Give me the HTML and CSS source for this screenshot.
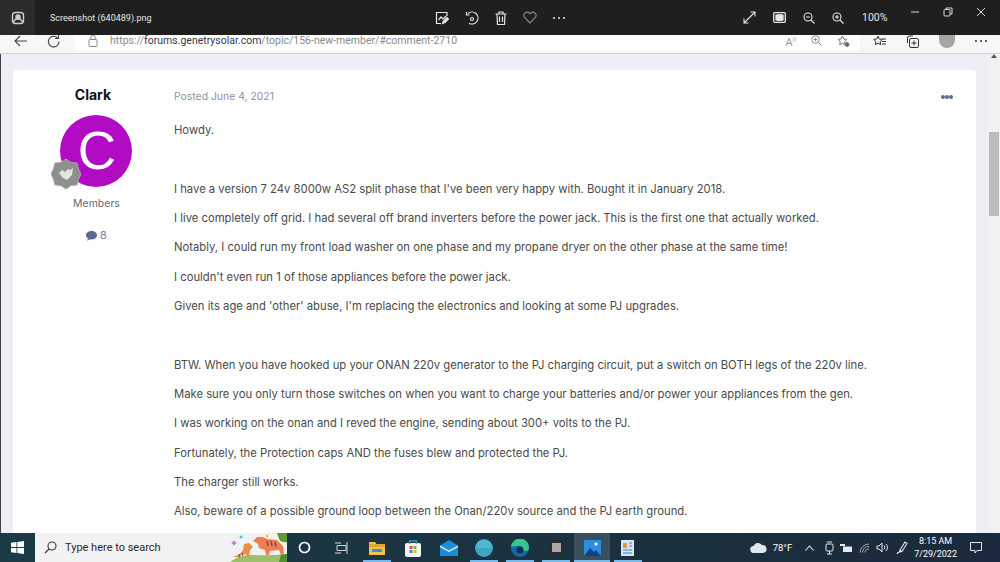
FILE: index.html
```html
<!DOCTYPE html>
<html lang="en">
<head>
  <meta charset="UTF-8">
  <title>Screenshot (640489).png</title>
  <link rel="stylesheet" href="styles.css">
</head>
<body>

  <!-- Photos app title bar -->
  <header class="viewer-bar">
    <div class="app-tile">
      <svg width="14" height="14" viewBox="0 0 14 14" fill="none" stroke="#d0d0d0" stroke-width="1.4"><rect x="1.5" y="1.5" width="11" height="11" rx="3"/><circle cx="7" cy="6" r="2" fill="#d0d0d0"/><path d="M2 11l3-3h4l3 3"/></svg>
    </div>
    <span class="file-name">Screenshot (640489).png</span>
    <div class="viewer-tools">
      <svg width="14" height="14" viewBox="0 0 14 14" fill="none" stroke="#e6e6e6" stroke-width="1.2"><path d="M12 5V1.500H1.500v11H6"/><path d="M3.500 9l2.500-3 2 2 3-3"/><path d="M7.500 12.500l1-2.500 3.500-3.500 1.500 1.500-3.500 3.500z" fill="#e6e6e6"/></svg>
      <svg width="14" height="14" viewBox="0 0 14 14" fill="none" stroke="#e6e6e6" stroke-width="1.2"><path d="M3 2.500A6 6 0 1 1 4 12.200"/><path d="M1.500 1v3h3"/><circle cx="7" cy="8" r="1.500"/></svg>
      <svg width="12" height="14" viewBox="0 0 12 14" fill="none" stroke="#e6e6e6" stroke-width="1.2"><path d="M.5 3h11M4 3V1h4v2M2 3l.5 10.500h7L10 3M4.500 5.500v5.500M7.500 5.500v5.500"/></svg>
      <svg width="14" height="13" viewBox="0 0 14 13" fill="none" stroke="#8c8c8c" stroke-width="1.1"><path d="M7 12L1.700 6.500a3.200 3.200 0 0 1 4.500-4.500L7 2.800l.8-.8a3.200 3.200 0 0 1 4.500 4.500z"/></svg>
      <span class="dots-light"><i></i><i></i><i></i></span>
    </div>
    <div class="zoom-tools">
      <svg width="13" height="13" viewBox="0 0 13 13" fill="none" stroke="#e6e6e6" stroke-width="1.1"><path d="M1 12L12 1M7.500 1H12v4.500M1 7.500V12h4.500"/></svg>
      <svg width="13" height="11" viewBox="0 0 13 11" fill="none" stroke="#e6e6e6" stroke-width="1.3"><rect x=".7" y=".7" width="11.600" height="9.600" rx="1"/><path d="M3 3.200q3.500-1 7 0v4.600q-3.500 1-7 0z" fill="#e6e6e6"/></svg>
      <svg width="12" height="12" viewBox="0 0 12 12" fill="none" stroke="#e6e6e6" stroke-width="1.1"><circle cx="5" cy="5" r="4"/><path d="M8 8l3.500 3.500M3 5h4"/></svg>
      <svg width="12" height="12" viewBox="0 0 12 12" fill="none" stroke="#e6e6e6" stroke-width="1.1"><circle cx="5" cy="5" r="4"/><path d="M8 8l3.500 3.500M3 5h4M5 3v4"/></svg>
      <span class="zoom-level">100%</span>
    </div>
    <div class="window-buttons">
      <svg width="10" height="10" viewBox="0 0 10 10" stroke="#d8d8d8" fill="none"><path d="M1 5h8"/></svg>
      <svg width="10" height="10" viewBox="0 0 10 10" stroke="#d8d8d8" fill="none"><rect x="1" y="2.500" width="6" height="6.500" rx="1"/><path d="M3 2.500V1h6v6H7"/></svg>
      <svg width="10" height="10" viewBox="0 0 10 10" stroke="#d8d8d8" fill="none"><path d="M1 1l8 8M9 1l-8 8"/></svg>
    </div>
  </header>

  <!-- Edge toolbar, cut off by the title bar -->
  <nav class="browser-bar">
    <svg class="nav-back" width="14" height="12" viewBox="0 0 14 12" fill="none" stroke="#444" stroke-width="1.100"><path d="M13 6H1M6 1L1 6l5 5"/></svg>
    <svg class="nav-reload" width="13" height="13" viewBox="0 0 13 13" fill="none" stroke="#444" stroke-width="1.100"><path d="M11 3.500A5.300 5.300 0 1 0 12 6.500M11.500 0v3.500H8"/></svg>
    <div class="address-bar">
      <svg width="10" height="12" viewBox="0 0 10 12" fill="none" stroke="#8a8a8a"><rect x="1" y="4.500" width="8" height="7" rx="1"/><path d="M3 4.500V2a2 2 0 0 1 4 0v2.500"/></svg>
      <span class="url"><span>https://</span><b>forums.genetrysolar.com</b><span>/topic/156-new-member/#comment-2710</span></span>
      <div class="address-icons">
        <span class="read-aloud">A<sup>))</sup></span>
        <svg width="11" height="11" viewBox="0 0 11 11" fill="none" stroke="#8a8a8a"><circle cx="4.500" cy="4.500" r="3.800"/><path d="M7.300 7.300l3.300 3.300M2.800 4.500h3.400M4.500 2.800v3.400"/></svg>
        <svg width="13" height="12" viewBox="0 0 13 12" fill="none" stroke="#777"><path d="M5.500 1l1.400 3 3.100.4-2.300 2.100.6 3.200L5.500 8.200 2.700 9.700l.6-3.200L1 4.400 4.100 4z"/><circle cx="10" cy="9.500" r="2" fill="#666"/></svg>
      </div>
    </div>
    <div class="edge-tools">
      <svg width="13" height="12" viewBox="0 0 13 12" fill="none" stroke="#333"><path d="M5 1l1.300 3 3 .4-2.200 2.100.6 3.200L5 8.200 2.300 9.700l.6-3.200L.7 4.400l3-.4zM9 4h4M9 6.500h4M9 9h4"/></svg>
      <svg width="13" height="13" viewBox="0 0 13 13" fill="none" stroke="#333"><path d="M1.500 8V3a2 2 0 0 1 2-2H7"/><rect x="3.500" y="3.500" width="9" height="9" rx="1.500"/><path d="M8 5.500v5M5.500 8h5"/></svg>
      <span class="profile"></span>
      <span class="dots-dark"><i></i><i></i><i></i></span>
    </div>
  </nav>

  <!-- Forum page -->
  <div class="page">
    <main class="post-column">
      <article class="post-card">
        <aside class="author">
          <h3 class="author-name">Clark</h3>
          <div class="avatar">C
            <svg class="rank-badge" width="30" height="32" viewBox="0 0 30 32">
              <path d="M15 1l5 3.500 6 .5 1.500 6L30 16l-2.500 5-1.500 6-6 .5L15 31l-5-3.500-6-.5-1.500-6L0 16l2.500-5L4 5l6-.5z" fill="#8e8e8e" stroke="#a8a8a8"/>
              <path d="M8 15l3-3 3 2 3-3 2 1 3-2-1 7-5 5-4-2z" fill="#e4e4e4"/>
            </svg>
          </div>
          <div class="author-group">Members</div>
          <div class="author-posts">
            <svg width="11" height="10" viewBox="0 0 11 10"><path d="M5.500 0C8.500 0 11 1.800 11 4.200S8.500 8.400 5.500 8.400c-.6 0-1.100 0-1.600-.2L1.200 9.800l.6-2.500C.7 6.500 0 5.400 0 4.200 0 1.800 2.500 0 5.500 0z" fill="#5d6b94"/></svg>
            <span>8</span>
          </div>
        </aside>
        <section class="post-body">
          <div class="post-meta">
            <span>Posted June 4, 2021</span>
            <span class="post-menu"><i></i><i></i><i></i></span>
          </div>
          <p>Howdy.</p>
          <p>&nbsp;</p>
          <p>I have a version 7 24v 8000w AS2 split phase that I've been very happy with. Bought it in January 2018.</p>
          <p>I live completely off grid. I had several off brand inverters before the power jack. This is the first one that actually worked.</p>
          <p>Notably, I could run my front load washer on one phase and my propane dryer on the other phase at the same time!</p>
          <p>I couldn't even run 1 of those appliances before the power jack.</p>
          <p>Given its age and 'other' abuse, I'm replacing the electronics and looking at some PJ upgrades.</p>
          <p>&nbsp;</p>
          <p>BTW. When you have hooked up your ONAN 220v generator to the PJ charging circuit, put a switch on BOTH legs of the 220v line.</p>
          <p>Make sure you only turn those switches on when you want to charge your batteries and/or power your appliances from the gen.</p>
          <p>I was working on the onan and I reved the engine, sending about 300+ volts to the PJ.</p>
          <p>Fortunately, the Protection caps AND the fuses blew and protected the PJ.</p>
          <p>The charger still works.</p>
          <p>Also, beware of a possible ground loop between the Onan/220v source and the PJ earth ground.</p>
        </section>
      </article>
    </main>
    <div class="scrollbar">
      <span class="scroll-arrow"></span>
      <span class="scroll-thumb"></span>
    </div>
  </div>

  <!-- Windows taskbar -->
  <footer class="taskbar">
    <div class="start">
      <svg width="13" height="13" viewBox="0 0 13 13" fill="#fff"><path d="M0 1.800L5.500 1v5H0zM6.300.9L13 0v6H6.300zM0 7h5.500v5L0 11.200zM6.300 7H13v6l-6.700-.9z"/></svg>
    </div>
    <div class="search-box">
      <svg width="13" height="13" viewBox="0 0 13 13" fill="none" stroke="#333" stroke-width="1.100"><circle cx="8" cy="5" r="4"/><path d="M5 8l-4 4"/></svg>
      <span>Type here to search</span>
      <svg class="tigers" width="60" height="29" viewBox="0 0 60 29">
        <path d="M50 0h10v9q-6 1-8-3z" fill="#5d9a3a"/>
        <path d="M3 29q10-8 24-7t33-1v8z" fill="#9cc06a"/>
        <path d="M54 21h6v8h-8z" fill="#4f8f35"/>
        <path d="M26 8l4-4 6 0 4 2 10 1 6 6 1 9h-3l-2-5-9 1-1 4h-3l-1-5-6-2-1-4z" fill="#ee7f52"/>
        <path d="M40 8l1 5M44 8l1 5M48 9l1 5" stroke="#6b4a6a" stroke-width="1.400"/>
        <path d="M6 24l7-3 3-4 1-6 5-1 4 4-3 3-1 7h-2l-1-3-5 1-1 3h-2l-1-1z" fill="#e98f4a"/>
        <path d="M12 21l1 3M15 20l1 3" stroke="#6b4a6a"/>
        <path d="M7 7l1 2 2 1-2 1-1 2-1-2-2-1 2-1z" fill="#c86ae0"/>
        <circle cx="14" cy="4" r="1.500" fill="#4cc8e0"/><circle cx="40" cy="3" r="1.300" fill="#f2b53a"/>
      </svg>
    </div>
    <div class="task-icons">
      <span class="task-slot">
        <svg width="13" height="13" viewBox="0 0 13 13" fill="none" stroke="#fff" stroke-width="1.700"><circle cx="6.500" cy="6.500" r="5"/></svg>
      </span>
      <span class="task-slot">
        <svg width="14" height="12" viewBox="0 0 14 12" fill="none" stroke="#d5d5d5"><path d="M1 1h6M1 11h6M3 3.500h9v5H3zM13 0v12"/></svg>
      </span>
      <span class="task-slot open">
        <svg width="16" height="14" viewBox="0 0 16 14"><path d="M0 1h6l1.500 2H16v11H0z" fill="#f2c14e"/><rect y="3" width="16" height="3" fill="#e3a72f"/><rect x="3" y="8" width="10" height="3" fill="#3f8fd6"/></svg>
      </span>
      <span class="task-slot">
        <svg width="16" height="18" viewBox="0 0 16 18"><rect y="4" width="16" height="14" rx="2" fill="#f5f5f5"/><path d="M4.500 5V2h7v3" fill="none" stroke="#2aa3c9" stroke-width="1.300"/><rect x="4.500" y="7" width="3" height="3" fill="#e0512f"/><rect x="8.500" y="7" width="3" height="3" fill="#7fb73a"/><rect x="4.500" y="11" width="3" height="3" fill="#2f8fd6"/><rect x="8.500" y="11" width="3" height="3" fill="#f2b92e"/></svg>
      </span>
      <span class="task-slot">
        <svg width="18" height="16" viewBox="0 0 18 16"><path d="M0 5.500L9 0l9 5.500V16H0z" fill="#1b8ed8"/><path d="M0 5.500l9 5 9-5V7l-9 5-9-5z" fill="#e8f4fc"/></svg>
      </span>
      <span class="task-slot open">
        <svg width="18" height="18" viewBox="0 0 18 18"><circle cx="9" cy="9" r="9" fill="#3ea6c2"/><path d="M1 9a8 8 0 0 1 16 0z" fill="#4cb7d2"/></svg>
      </span>
      <span class="task-slot open">
        <svg width="18" height="18" viewBox="0 0 18 18"><circle cx="9" cy="9" r="9" fill="#1567a8"/><path d="M0 8a9 9 0 0 1 18 1q0 3-4 3-3 0-3-2 1-3-3-3-5 0-8 1z" fill="#35c48d"/><circle cx="9" cy="11" r="3.500" fill="#0f2f4a"/></svg>
      </span>
      <span class="task-slot open">
        <svg width="15" height="15" viewBox="0 0 15 15"><rect width="15" height="15" rx="1.500" fill="#2b2b2b"/><rect x="3" y="3" width="9" height="9" fill="#a8a8a8"/></svg>
      </span>
      <span class="task-slot open active">
        <svg width="17" height="16" viewBox="0 0 17 16"><rect width="17" height="16" fill="#2b8fe0"/><path d="M0 16l6-8 4 4 2-2 5 6z" fill="#123f85"/><circle cx="12" cy="4" r="1.500" fill="#fff"/></svg>
      </span>
      <span class="task-slot open">
        <svg width="13" height="16" viewBox="0 0 13 16"><rect width="13" height="16" fill="#d9e5f2"/><rect x="2" y="3" width="4" height="5" fill="#e09a3a"/><path d="M8 3h3M8 6h3M2 10h9M2 13h9" stroke="#3f7fc9"/></svg>
      </span>
    </div>
    <div class="tray">
      <svg width="17" height="11" viewBox="0 0 17 11" fill="#dfe8f2"><path d="M4 11a3.500 3.500 0 0 1-.5-7A5 5 0 0 1 12 3a4 4 0 0 1 1 8z"/></svg>
      <span class="temp">78°F</span>
      <svg class="tray-chevron" width="9" height="6" viewBox="0 0 9 6" fill="none" stroke="#e8e8e8" stroke-width="1.100"><path d="M.5 5.500l4-4.500 4 4.500"/></svg>
      <svg class="tray-tablet" width="9" height="14" viewBox="0 0 9 14" fill="none" stroke="#e8e8e8"><rect x="1" y="3" width="7" height="7" rx="1"/><path d="M2 1h5M4.500 10v3M2 13h5"/></svg>
      <svg class="tray-power" width="12" height="8" viewBox="0 0 12 8" fill="#e8e8e8"><path d="M0 0h5v2H0zM3 2.500h9V8H3z"/></svg>
      <svg class="tray-wifi" width="11" height="10" viewBox="0 0 11 10" fill="none" stroke="#a8a8a8"><path d="M1 9.500A9 9 0 0 1 10 1M3.500 9.500A6 6 0 0 1 10 3.500M6 9.500A3.500 3.500 0 0 1 10 6"/></svg>
      <svg class="tray-sound" width="12" height="11" viewBox="0 0 12 11" fill="none" stroke="#e8e8e8"><path d="M1 4v3h2l3 3V1L3 4zM8 3.500a3 3 0 0 1 0 4M10 2a5 5 0 0 1 0 7"/></svg>
      <svg class="tray-pen" width="12" height="14" viewBox="0 0 12 14" fill="none" stroke="#e8e8e8" stroke-width="1.100"><path d="M4 9l5-8 2 1.500L6 10.500zM4 9l-.5 2M1 13c1-3 3-1 4-3"/></svg>
      <div class="clock">
        <span>8:15 AM</span>
        <span>7/29/2022</span>
      </div>
      <svg class="notify" width="12" height="12" viewBox="0 0 12 12" fill="none" stroke="#e8e8e8"><path d="M.5.5h11v8H7L5 11V8.500H.5z"/></svg>
    </div>
  </footer>

</body>
</html>
```

FILE: styles.css
```css
* {
  box-sizing: border-box;
  margin: 0;
  padding: 0;
}

body {
  width: 1000px;
  height: 562px;
  display: flex;
  flex-direction: column;
  overflow: hidden;
  font-family: Inter, "Noto Sans", sans-serif;
  background: #edeff5;
}

/* Photos title bar */
.viewer-bar {
  height: 35px;
  flex: none;
  display: flex;
  align-items: center;
  background: #1f1f1f;
  color: #e6e6e6;
}

.app-tile {
  width: 35px;
  height: 35px;
  display: flex;
  align-items: center;
  justify-content: center;
  background: #2b2b2b;
}

.file-name {
  margin-left: 15px;
  width: 385px;
  font-family: Roboto, sans-serif;
  font-size: 9px;
}

.viewer-tools {
  display: flex;
  align-items: center;
  gap: 16px;
  width: 308px;
}

.dots-light,
.dots-dark,
.post-menu {
  display: flex;
  gap: 3px;
}

.dots-light i,
.dots-dark i {
  width: 2px;
  height: 2px;
  border-radius: 50%;
  background: #e6e6e6;
}

.dots-dark i {
  background: #333;
}

.zoom-tools {
  display: flex;
  align-items: center;
  gap: 17px;
  width: 167px;
}

.zoom-level {
  font-family: Roboto, sans-serif;
  font-size: 10.5px;
  margin-left: 1px;
}

.window-buttons {
  display: flex;
  gap: 23px;
  margin-top: -11px;
}

/* Edge toolbar */
.browser-bar {
  height: 19px;
  flex: none;
  display: flex;
  align-items: flex-start;
  background: #f7f7f7;
  border-bottom: 1px solid #d2d2d2;
}

.nav-back {
  margin: 0 0 0 14px;
  flex: none;
}

.nav-reload {
  margin: 0 0 0 19px;
  flex: none;
}

.address-bar {
  width: 786px;
  height: 16px;
  margin-left: 14px;
  padding-left: 14px;
  display: flex;
  align-items: flex-start;
  background: #fff;
  border-radius: 0 0 6px 6px;
  flex: none;
}

.url {
  margin: -1px 0 0 12px;
  font-family: Roboto, sans-serif;
  font-size: 10.5px;
  line-height: 14px;
  color: #8a8a8a;
}

.url b {
  font-weight: 400;
  color: #3a3a48;
}

.address-icons {
  margin-left: auto;
  margin-right: 10px;
  display: flex;
  align-items: flex-start;
  gap: 15px;
}

.read-aloud {
  font-family: "Open Sans", sans-serif;
  font-size: 11px;
  line-height: 13px;
  color: #999;
}

.read-aloud sup {
  font-size: 6px;
  line-height: 0;
}

.edge-tools {
  display: flex;
  align-items: flex-start;
  gap: 20px;
  margin-left: 13px;
}

.profile {
  width: 16px;
  height: 13px;
  border-radius: 0 0 8px 8px;
  background: #a8a4a0;
}

.edge-tools .dots-dark {
  margin-top: 5px;
}

/* Forum page */
.page {
  flex: 1;
  min-height: 0;
  display: flex;
  border-left: 1px solid #444;
  overflow: hidden;
}

.post-column {
  flex: 1;
  padding: 16px 0 0 12px;
  overflow: hidden;
}

.post-card {
  width: 963px;
  height: 520px;
  display: flex;
  background: #fff;
  border-radius: 4px 4px 0 0;
}

.author {
  width: 161px;
  flex: none;
  text-align: center;
  padding-top: 16px;
}

.author-name {
  width: 160px;
  font-size: 14px;
  line-height: 18px;
  font-weight: 700;
  color: #111;
}

.avatar {
  position: relative;
  width: 72px;
  height: 72px;
  margin: 11px 0 0 47px;
  padding-left: 2px;
  border-radius: 50%;
  background: #b20bc4;
  color: #fff;
  font-family: "Liberation Sans", sans-serif;
  font-size: 53px;
  line-height: 72px;
}

.rank-badge {
  position: absolute;
  left: -9px;
  top: 43px;
}

.author-group {
  margin-top: 9px;
  padding-left: 6px;
  font-size: 10.5px;
  line-height: 15px;
  color: #6a6a6a;
}

.author-posts {
  margin-top: 17px;
  padding-left: 6px;
  display: flex;
  justify-content: center;
  align-items: center;
  gap: 3px;
  font-size: 11px;
  line-height: 15px;
  color: #7a7f96;
}

.post-body {
  flex: 1;
  padding-top: 20px;
  font-size: 11.27px;
  line-height: 19.35px;
  color: #4a4a4a;
}

.post-meta {
  display: flex;
  justify-content: space-between;
  height: 16px;
  margin-bottom: 15px;
  line-height: 14px;
  font-size: 10.4px;
  color: #8f8fa8;
}

.post-menu {
  margin: 5px 23px 0 0;
  gap: 0;
}

.post-menu i {
  width: 4px;
  height: 4px;
  border-radius: 50%;
  background: #5d6b94;
}

.post-body p {
  margin-bottom: 10px;
}

/* Scrollbar */
.scrollbar {
  width: 13px;
  flex: none;
  background: #f1f1f1;
}

.scroll-arrow {
  display: block;
  width: 0;
  margin: 0 auto;
  border-left: 3px solid transparent;
  border-right: 3px solid transparent;
  border-bottom: 4px solid #555;
}

.scroll-thumb {
  display: block;
  width: 10px;
  height: 84px;
  margin: 74px 0 0 2px;
  background: #bdbdbd;
}

/* Taskbar */
.taskbar {
  height: 29px;
  flex: none;
  display: flex;
  align-items: center;
  background: linear-gradient(90deg, #1a3a46, #1b3340 50%, #1a2a3c);
  color: #fff;
}

.start {
  width: 35px;
  display: flex;
  justify-content: center;
  flex: none;
}

.search-box {
  width: 252px;
  height: 29px;
  flex: none;
  display: flex;
  align-items: center;
  gap: 8px;
  padding-left: 9px;
  position: relative;
  background: #f2f2f2;
  color: #2a2a2a;
  font-family: Roboto, sans-serif;
  font-size: 11px;
}

.tigers {
  position: absolute;
  right: 0;
  top: 0;
}

.task-icons {
  display: flex;
  align-items: center;
  height: 29px;
}

.task-slot {
  position: relative;
  width: 35.9px;
  height: 29px;
  display: flex;
  align-items: center;
  justify-content: center;
}

/* running-app marker, shorter than the slot */
.task-slot.open::after {
  content: "";
  position: absolute;
  left: 4px;
  right: 4px;
  bottom: 0;
  height: 2px;
  background: #76b9ed;
}

.task-slot.active {
  background: #3a4e5c;
}

.task-slot.active::after {
  left: 0;
  right: 0;
}

.tray {
  flex: 1;
  display: flex;
  align-items: center;
  justify-content: flex-end;
  padding-right: 18px;
}

.temp {
  font-family: Roboto, sans-serif;
  font-size: 9.5px;
  margin-left: 6px;
}

.tray-chevron {
  margin-left: 13px;
}

.tray-tablet {
  margin-left: 11px;
}

.tray-power {
  margin-left: 6px;
}

.tray-wifi {
  margin-left: 7px;
}

.tray-sound {
  margin-left: 6px;
}

.tray-pen {
  margin-left: 8px;
}

.clock {
  display: flex;
  flex-direction: column;
  align-items: center;
  margin-left: 6px;
  font-family: Roboto, sans-serif;
  font-size: 9px;
  line-height: 13px;
}

.notify {
  margin-left: 13px;
}
```
